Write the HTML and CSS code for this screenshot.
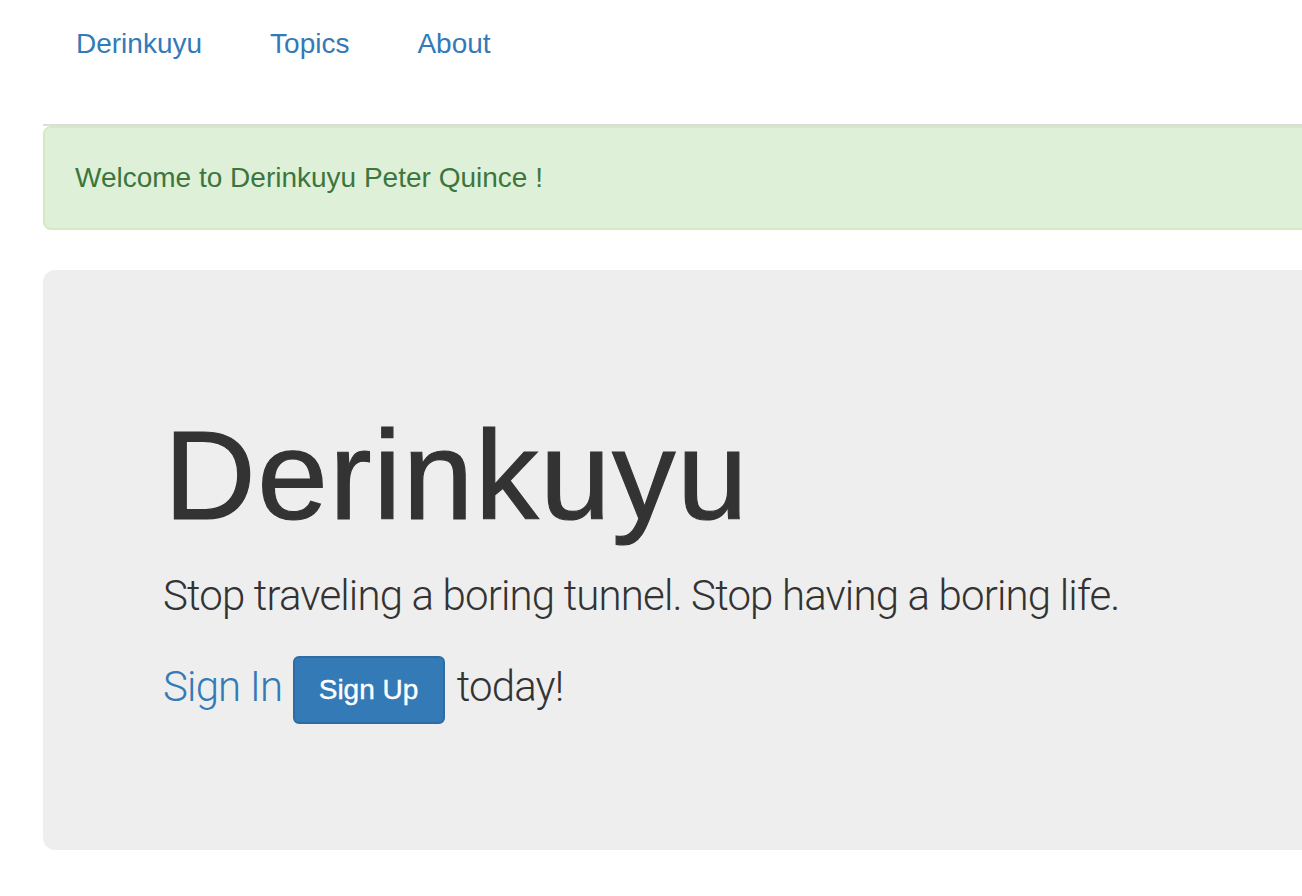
FILE: index.html
```html
<!DOCTYPE html>
<html lang="en">
<head>
<meta charset="utf-8">
<title>Derinkuyu</title>
<link rel="stylesheet" href="styles.css">
</head>
<body>
<div class="container">
  <nav class="nav">
    <a class="nav-link" href="#">Derinkuyu</a>
    <a class="nav-link" href="#">Topics</a>
    <a class="nav-link" href="#">About</a>
  </nav>
  <div class="rule"></div>
  <div class="alert">Welcome to Derinkuyu Peter Quince !</div>
  <div class="jumbotron">
    <h1 class="title">Derinkuyu</h1>
    <p class="lead">Stop traveling a boring tunnel. Stop having a boring life.</p>
    <p class="lead"><a class="signin" href="#">Sign In</a> <a class="btn" href="#">Sign Up</a> today!</p>
  </div>
</div>
</body>
</html>
```
FILE: styles.css
```css
html, body {
  margin: 0;
  padding: 0;
  overflow: hidden;
  background: #fff;
}
body {
  font-family: "Liberation Sans", Arial, sans-serif;
  font-size: 28px;
  line-height: 40px;
  color: #333;
}
.container {
  margin-left: 43px;
  width: 2300px;
}
.nav {
  display: flex;
  gap: 8px;
  padding: 4px 0 0 3px;
  height: 124px;
  box-sizing: border-box;
}
.nav-link {
  display: block;
  padding: 20px 30px;
  height: 40px;
  color: #337ab7;
  text-decoration: none;
}
.rule {
  height: 2px;
  background: #dddddd;
}
.alert {
  background: #dff0d8;
  border: 2px solid #d6e9c6;
  border-radius: 8px;
  color: #3c763d;
  padding: 30px;
  margin-bottom: 40px;
}
.jumbotron {
  background: #eeeeee;
  border-radius: 12px;
  padding: 96px 120px 96px 120px;
}
.title {
  font-family: "Liberation Sans", Arial, sans-serif;
  font-size: 127px;
  font-weight: 400;
  letter-spacing: 1.5px;
  -webkit-text-stroke: 1.2px #333;
  line-height: 1.1;
  margin: 40px 0 20px 1px;
  color: #333;
}
.lead {
  font-family: Roboto, "Liberation Sans", sans-serif;
  font-weight: 300;
  font-size: 42px;
  letter-spacing: -0.85px;
  line-height: 60px;
  margin: 0 0 30px 0;
  color: #333;
}
.signin {
  color: #337ab7;
  text-decoration: none;
}
.btn {
  display: inline-block;
  vertical-align: middle;
  font-family: "Liberation Sans", Arial, sans-serif;
  font-size: 28px;
  font-weight: 400;
  letter-spacing: 0;
  -webkit-text-stroke: 0.4px #fff;
  line-height: 40px;
  padding: 12px 25px 12px 24px;
  margin: 0 2px 0 1px;
  color: #fff;
  background: #337ab7;
  border: 2px solid #2e6da4;
  border-radius: 6px;
  text-decoration: none;
}
```
